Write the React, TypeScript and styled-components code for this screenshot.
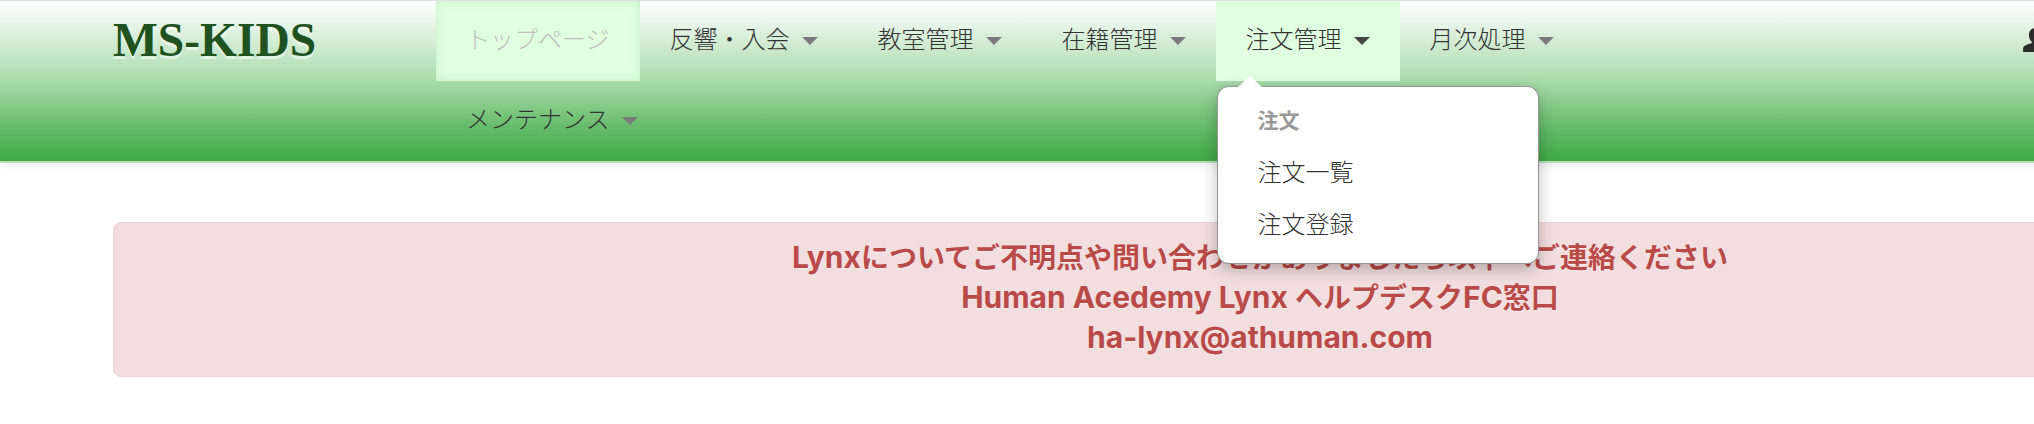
import React from 'react';
import styled, { createGlobalStyle } from 'styled-components';

const GlobalStyle = createGlobalStyle`
  html, body {
    margin: 0;
    padding: 0;
    background: #fff;
    overflow: hidden;
  }
  body {
    font-family: 'Inter', 'Noto Sans CJK JP', sans-serif;
    color: #333;
  }
`;

const Page = styled.div`
  width: 2520px;
`;

const Header = styled.header`
  display: flex;
  align-items: flex-start;
  height: 160px;
  padding-left: 113px;
  border-top: 1px solid #dcdfe3;
  border-bottom: 2px solid #b5deb6;
  box-sizing: content-box;
  background: linear-gradient(to bottom, #ffffff 0%, #a9dbab 50%, #63ba68 80%, #3fa845 100%);
  box-shadow: 0 1px 10px rgba(0, 0, 0, 0.1);
`;

const Logo = styled.a`
  flex: 0 0 323px;
  height: 80px;
  line-height: 79px;
  font-family: 'Liberation Serif', serif;
  font-size: 47.500px;
  font-weight: 700;
  color: #1f521e;
  text-shadow: 0 3px 0 rgba(255, 255, 255, 0.55);
`;

const Nav = styled.nav`
  flex: 0 0 1200px;
  display: flex;
  flex-wrap: wrap;
  position: relative;
`;

const NavItem = styled.a<{ $state?: 'current' | 'open' }>`
  height: 80px;
  line-height: 74px;
  padding: 0 30px;
  font-size: 24px;
  font-family: 'Noto Sans CJK JP', sans-serif;
  font-weight: 300;
  white-space: nowrap;
  color: ${(p) => (p.$state === 'current' ? '#bdbdbd' : '#333')};
  background: ${(p) => (p.$state ? '#e0ffe0' : 'transparent')};
  box-shadow: ${(p) => (p.$state === 'current' ? 'inset 0 0 10px rgba(120, 190, 120, 0.25)' : 'none')};
  position: relative;
`;

const Caret = styled.span<{ $dark?: boolean }>`
  display: inline-block;
  margin-left: 12px;
  vertical-align: middle;
  border-left: 8px solid transparent;
  border-right: 8px solid transparent;
  border-top: 8px solid ${(p) => (p.$dark ? '#444' : '#7a7a7a')};
`;

const Dropdown = styled.div`
  position: absolute;
  top: 85px;
  left: 1px;
  width: 322px;
  height: 178px;
  box-sizing: border-box;
  padding: 11px 0;
  background: #fff;
  border: 1px solid rgba(0, 0, 0, 0.42);
  border-radius: 12px;
  box-shadow: 0 5px 16px rgba(0, 0, 0, 0.25);
  z-index: 10;
  &::before {
    content: '';
    position: absolute;
    top: -11px;
    left: 20px;
    width: 0;
    height: 0;
    border-left: 12px solid transparent;
    border-right: 12px solid transparent;
    border-bottom: 11px solid #fff;
  }
`;

const DropdownHeader = styled.div`
  height: 47px;
  line-height: 42px;
  padding-left: 40px;
  font-size: 21px;
  font-weight: 700;
  color: #999;
  font-family: 'Noto Sans CJK JP', sans-serif;
`;

const DropdownLink = styled.a`
  display: block;
  height: 52px;
  line-height: 52px;
  padding-left: 40px;
  font-size: 24px;
  font-weight: 300;
  color: #333;
  font-family: 'Noto Sans CJK JP', sans-serif;
`;

const UserIcon = styled.svg`
  flex: none;
  margin: 26px 0 0 386px;
  width: 26px;
  height: 26px;
  fill: #2b2b2b;
`;

const Content = styled.main`
  padding: 59px 113px 0;
`;

const Alert = styled.div`
  padding: 15px 0 18px;
  background: #f2dede;
  border: 1px solid #eed3d7;
  border-radius: 8px;
  text-align: center;
  font-size: 28px;
  line-height: 40px;
  font-weight: 700;
  color: #b94a48;
  text-shadow: 0 1px 0 rgba(255, 255, 255, 0.5);
`;

const Latin = styled.span`
  font-size: 30px;
  line-height: 1;
`;

const App = () => (
  <Page>
    <GlobalStyle />
    <Header>
      <Logo>MS-KIDS</Logo>
      <Nav>
        <NavItem $state="current">トップページ</NavItem>
        <NavItem>反響・入会<Caret /></NavItem>
        <NavItem>教室管理<Caret /></NavItem>
        <NavItem>在籍管理<Caret /></NavItem>
        <NavItem $state="open">
          注文管理<Caret $dark />
          <Dropdown>
            <DropdownHeader>注文</DropdownHeader>
            <DropdownLink>注文一覧</DropdownLink>
            <DropdownLink>注文登録</DropdownLink>
          </Dropdown>
        </NavItem>
        <NavItem>月次処理<Caret /></NavItem>
        <NavItem>メンテナンス<Caret /></NavItem>
      </Nav>
      <UserIcon viewBox="0 0 24 24">
        <path d="M12 1c3.600 0 5.600 2.700 5.600 6.300 0 2.700-1 4.900-2.600 6v1.800c3.400.8 8 2.400 8 4.400V23H1v-3.500c0-2 4.600-3.600 8-4.400v-1.800C7.400 12.200 6.400 10 6.400 7.300 6.400 3.700 8.400 1 12 1z" />
      </UserIcon>
    </Header>
    <Content>
      <Alert>
        <Latin>Lynx</Latin>についてご不明点や問い合わせがありましたら以下へご連絡ください
        <br />
        <Latin>Human Acedemy Lynx </Latin>ヘルプデスク<Latin>FC</Latin>窓口
        <br />
        <Latin>ha-lynx@athuman.com</Latin>
      </Alert>
    </Content>
  </Page>
);

export default App;
